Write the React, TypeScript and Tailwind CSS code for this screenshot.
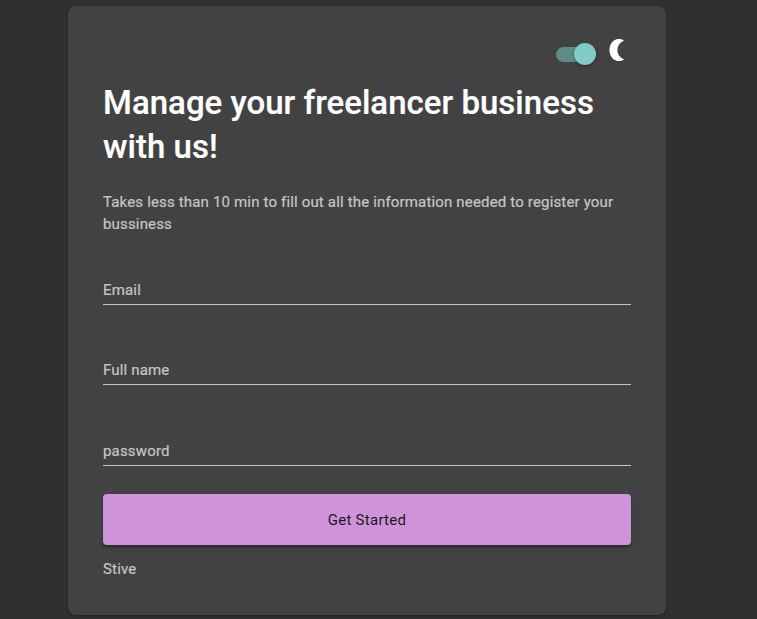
import React from "react";

function Field({ label, className }: { label: string; className: string }) {
  return (
    <div className={`flex h-8 items-center border-b border-[#c6c6c6] pt-1 text-[15px] leading-none tracking-[0.165px] text-[#c6c6c6] [-webkit-text-stroke:0.2px] ${className}`}>
      {label}
    </div>
  );
}

export default function App() {
  return (
    <main className="flex h-[619px] flex-col bg-[#303030] pl-[68px] pt-[6px] font-[Roboto,sans-serif] font-normal">
      <section className="flex h-[609px] w-[598px] flex-col rounded-lg bg-[#424242] px-[35px] shadow-[0_1px_3px_rgba(0,0,0,0.3)]">
        <div className="mt-8 flex h-6 items-center justify-end">
          <div className="mt-2 flex h-[15px] w-[40px] items-center justify-end rounded-full bg-[#618b87]">
            <span className="h-[22px] w-[22px] rounded-full bg-[#80cbc4] shadow-[0_1px_3px_rgba(0,0,0,0.4)]" />
          </div>
          <svg className="ml-[13px] mr-[7px]" width="15" height="24" viewBox="0 0 15 24">
            <path d="M15 2.500C12.500 0.800 9.500 0.700 7.500 1.300C3.200 2.600 0.500 7 0.500 12s2.700 9.400 7 10.700c2 .6 5 .4 7.500-1.200C6.200 17.500 6.200 6.500 15 2.500Z" fill="#fff" />
          </svg>
        </div>
        <h1 className="mt-[19px] text-[33px] font-medium leading-[44px] tracking-[0.02px] text-white [-webkit-text-stroke:0.2px]">
          Manage your freelancer business<br />with us!
        </h1>
        <p className="mt-[22px] text-[15px] leading-[22px] tracking-[0.165px] text-[#c6c6c6] [-webkit-text-stroke:0.2px]">
          Takes less than 10 min to fill out all the information needed to register your<br />bussiness
        </p>
        <Field label="Email" className="mt-[38px]" />
        <Field label="Full name" className="mt-12" />
        <Field label="password" className="mt-[49px]" />
        <button className="mt-7 h-[51px] w-full rounded bg-[#ce93d8] pt-px text-[15px] tracking-[0.27px] text-black/87 shadow-[0_2px_3px_rgba(0,0,0,0.4)]">
          Get Started
        </button>
        <p className="mt-[13px] text-[15px] leading-[22px] tracking-[0.165px] text-[#c6c6c6] [-webkit-text-stroke:0.2px]">Stive</p>
      </section>
    </main>
  );
}
